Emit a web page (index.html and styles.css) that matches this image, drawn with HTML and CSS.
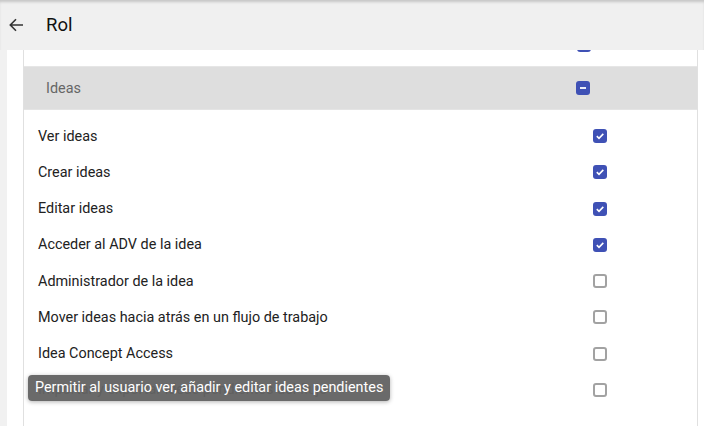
FILE: index.html
```html
<!DOCTYPE html>
<html lang="es">
<head>
  <meta charset="UTF-8">
  <title>Rol</title>
  <link rel="stylesheet" href="styles.css">
</head>
<body>

  <header class="topbar">
    <button class="back-btn" aria-label="Volver">
      <svg width="16" height="16" viewBox="0 0 16 16"><path d="M15 8H2.5M8 2.3L2.3 8 8 13.7" fill="none" stroke="#333" stroke-width="1.6"/></svg>
    </button>
    <h1>Rol</h1>
  </header>

  <main class="page">
    <div class="card">
      <div class="panel">

        <div class="prev-tail">
          <span class="check on tail"></span>
        </div>

        <div class="group-head">
          <span class="group-name">Ideas</span>
          <span class="check on partial"><svg width="14" height="14" viewBox="0 0 14 14"><path d="M4 7h6" stroke="#fff" stroke-width="1.8"/></svg></span>
        </div>

        <ul class="perm-list">
          <li class="perm"><span>Ver ideas</span><span class="check on"><svg width="14" height="14" viewBox="0 0 14 14"><path d="M3.8 7.2l2.2 2.1 4.3-4.4" fill="none" stroke="#fff" stroke-width="1.6"/></svg></span></li>
          <li class="perm"><span>Crear ideas</span><span class="check on"><svg width="14" height="14" viewBox="0 0 14 14"><path d="M3.8 7.2l2.2 2.1 4.3-4.4" fill="none" stroke="#fff" stroke-width="1.6"/></svg></span></li>
          <li class="perm"><span>Editar ideas</span><span class="check on"><svg width="14" height="14" viewBox="0 0 14 14"><path d="M3.8 7.2l2.2 2.1 4.3-4.4" fill="none" stroke="#fff" stroke-width="1.6"/></svg></span></li>
          <li class="perm"><span>Acceder al ADV de la idea</span><span class="check on"><svg width="14" height="14" viewBox="0 0 14 14"><path d="M3.8 7.2l2.2 2.1 4.3-4.4" fill="none" stroke="#fff" stroke-width="1.6"/></svg></span></li>
          <li class="perm"><span>Administrador de la idea</span><span class="check"></span></li>
          <li class="perm"><span>Mover ideas hacia atrás en un flujo de trabajo</span><span class="check"></span></li>
          <li class="perm"><span>Idea Concept Access</span><span class="check"></span></li>
          <li class="perm hovered">
            <span class="under">Importar y exportar ideas pendientes del flujo</span><span class="check"></span>
            <div class="tooltip">Permitir al usuario ver, añadir y editar ideas pendientes</div>
          </li>
        </ul>

      </div>
    </div>
  </main>

</body>
</html>
```

FILE: styles.css
```css
html, body {
  margin: 0;
  padding: 0;
  height: 100%;
}
body {
  font-family: Roboto, "Liberation Sans", sans-serif;
  background: #f1f1f1;
  color: #222;
  display: flex;
  flex-direction: column;
  overflow: hidden;
}
.topbar {
  height: 50px;
  flex: none;
  display: flex;
  align-items: center;
  background: #f0f0f0;
  box-shadow: inset 0 3px 3px -1px rgba(0,0,0,0.18);
}
.back-btn {
  width: 30px;
  height: 30px;
  margin-left: 1px;
  padding: 0;
  border: none;
  background: none;
  display: flex;
  align-items: center;
  justify-content: center;
}
.topbar h1 {
  margin: 0 0 0 15px;
  font-size: 18.5px;
  font-weight: 400;
  color: #111;
}
.page {
  flex: 1;
  padding-left: 7px;
  display: flex;
}
.card {
  flex: 1;
  background: #fff;
  padding-left: 16px;
  padding-right: 6px;
  display: flex;
}
.panel {
  flex: 1;
  border-left: 1px solid #e0e0e0;
  border-right: 1px solid #e0e0e0;
}
.prev-tail {
  height: 16px;
  overflow: hidden;
  padding-left: 553px;
}
.prev-tail .tail {
  margin-top: -12px;
}
.check {
  width: 14px;
  height: 14px;
  box-sizing: border-box;
  border: 2px solid #a2a2a2;
  border-radius: 3px;
  flex: none;
  display: flex;
  align-items: center;
  justify-content: center;
}
.check.on {
  background: #3f51b5;
  border: none;
}
.group-head {
  height: 44px;
  display: flex;
  align-items: center;
  justify-content: space-between;
  padding: 0 107px 0 22px;
  background: #dedede;
  border-top: 1px solid #e6e6e6;
  border-bottom: 1px solid #e4e4e4;
  box-sizing: border-box;
}
.group-name {
  font-size: 14.4px;
  color: #666;
}
.perm-list {
  list-style: none;
  margin: 0;
  padding: 8px 0 0 0;
}
.perm {
  height: 36.25px;
  display: flex;
  align-items: center;
  justify-content: space-between;
  padding: 0 90px 0 14px;
  font-size: 14.4px;
  color: #222;
  position: relative;
}
.perm .under {
  color: #555;
}
.tooltip {
  position: absolute;
  left: 4px;
  top: 3px;
  height: 26px;
  line-height: 26px;
  padding: 0 7px;
  font-size: 14.4px;
  color: #fff;
  background: rgba(97,97,97,0.94);
  border-radius: 4px;
  box-shadow: 0 1px 4px rgba(0,0,0,0.3);
  white-space: nowrap;
}
```
